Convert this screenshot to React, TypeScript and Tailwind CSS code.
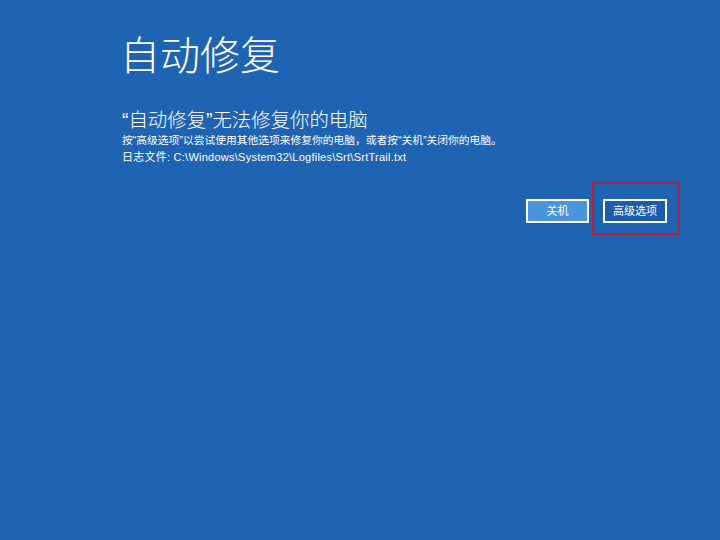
const font = {
  fontFamily: '"Liberation Sans", "Noto Sans CJK SC", sans-serif',
};

export default function App() {
  return (
    <div
      className="w-[720px] h-[540px] bg-[#1f63b3] text-white overflow-hidden"
      style={font}
    >
      <div className="pl-[122px] pt-[33px]">
        <h1 className="text-[40px] leading-[46px] font-light -ml-[2px]">自动修复</h1>

        <h2 className="mt-[30px] text-[19.4px] leading-[22px] font-light">
          “自动修复”无法修复你的电脑
        </h2>
        <p className="mt-[2px] text-[10.75px] leading-[14px]">
          按“高级选项”以尝试使用其他选项来修复你的电脑，或者按“关机”关闭你的电脑。
        </p>
        <p className="mt-[3px] text-[11px] leading-[14px] tracking-[0.25px]">
          日志文件: C:\Windows\System32\Logfiles\Srt\SrtTrail.txt
        </p>
      </div>

      <div className="mt-[18px] flex justify-end items-start pr-[40px] gap-[3px]">
        <button className="mt-[17px] w-[63px] h-[24px] border-2 border-white bg-[#4a94db] text-[11px] text-white">
          关机
        </button>
        <div className="border-2 border-[#b3233a] pl-[9px] pr-[11px] pt-[15px] pb-[10px]">
          <button className="w-[64px] h-[24px] border-2 border-white bg-[#1e5cab] text-[11px] text-white block">
            高级选项
          </button>
        </div>
      </div>
    </div>
  );
}
